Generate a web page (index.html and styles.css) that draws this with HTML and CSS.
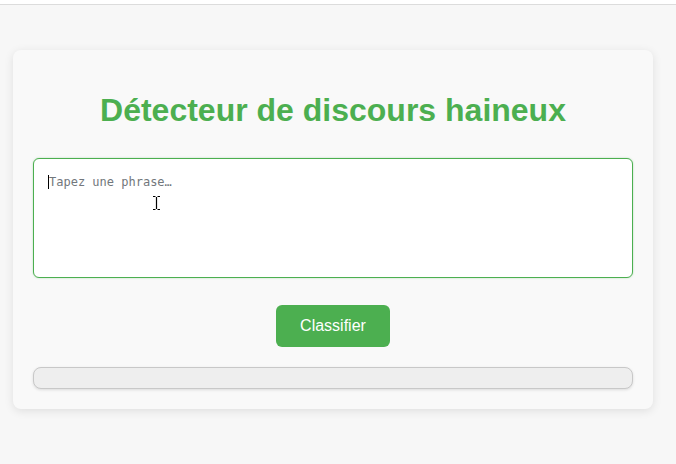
FILE: index.html
```html
<!DOCTYPE html>
<html lang="fr">
<head>
<meta charset="utf-8">
<title>Détecteur de discours haineux</title>
<link rel="stylesheet" href="styles.css">
</head>
<body>
<div class="topbar"></div>
<main class="card">
  <h1 class="title">Détecteur de discours haineux</h1>
  <div class="field">
    <textarea class="input" placeholder="Tapez une phrase…"></textarea>
    <span class="caret"></span>
    <svg class="ibeam" width="9" height="16" viewBox="0 0 9 16"><path d="M1 1.5h2.5M5.5 1.5H8M4.5 2v12M1 14.5h2.5M5.5 14.5H8" stroke="#000" stroke-width="1.2" fill="none"/></svg>
  </div>
  <div class="actions">
    <button class="btn" type="button">Classifier</button>
  </div>
  <div class="progress"></div>
</main>
</body>
</html>
```
FILE: styles.css
```css
html, body {
  margin: 0;
  padding: 0;
}
body {
  background: #f7f7f7;
  font-family: "Liberation Sans", Arial, sans-serif;
  height: 464px;
  overflow: hidden;
}
.topbar {
  height: 4px;
  background: #ffffff;
  border-bottom: 1px solid #dcdcdc;
}
.card {
  width: 600px;
  margin: 45px 0 0 13px;
  padding: 20px;
  background: #f9f9f9;
  border-radius: 8px;
  box-shadow: 0 2px 10px rgba(0, 0, 0, 0.1);
}
.title {
  margin: 22px 0 29px;
  text-align: center;
  color: #4caf50;
  font-size: 32px;
  font-weight: bold;
  line-height: 37px;
}
.field {
  position: relative;
  height: 120px;
}
.input {
  display: block;
  box-sizing: border-box;
  width: 600px;
  height: 120px;
  margin: 0;
  padding: 16px 15px;
  border: 1px solid #4caf50;
  border-radius: 6px;
  background: #fff;
  font-family: "DejaVu Sans Mono", monospace;
  font-size: 12px;
  line-height: 15px;
  resize: none;
  outline: none;
  box-shadow: 0 0 2px rgba(76, 175, 80, 0.4);
}
.input::placeholder {
  color: #72777c;
}
.caret {
  position: absolute;
  left: 15px;
  top: 17px;
  width: 1px;
  height: 14px;
  background: #000;
}
.ibeam {
  position: absolute;
  left: 119px;
  top: 37px;
}
.actions {
  display: flex;
  justify-content: center;
  margin-top: 27px;
}
.btn {
  height: 42px;
  padding: 0 24px;
  border: none;
  border-radius: 6px;
  background: #4caf50;
  color: #fff;
  font-family: "Liberation Sans", Arial, sans-serif;
  font-size: 16px;
}
.progress {
  box-sizing: border-box;
  height: 22px;
  margin-top: 20px;
  background: #eeeeee;
  border: 1px solid #c8c8c8;
  border-radius: 8px;
  box-shadow: 0 1px 3px rgba(0, 0, 0, 0.12);
}
```
